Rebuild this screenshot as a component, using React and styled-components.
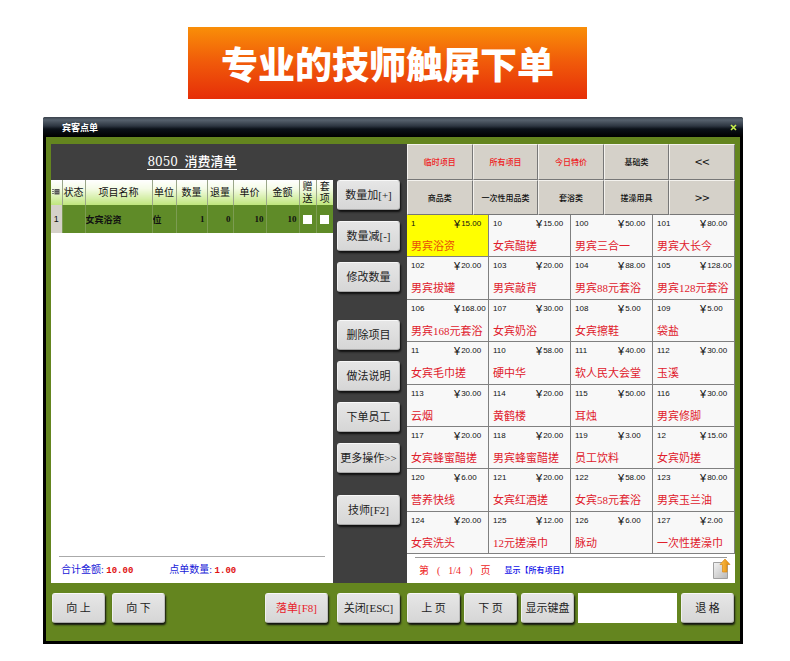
import React, { useState } from 'react'
import styled, { createGlobalStyle } from 'styled-components'

const GlobalStyle = createGlobalStyle`
  * {
    box-sizing: border-box;
  }
  body {
    margin: 0;
    background: white;
    font-family: "Liberation Serif", "Noto Sans CJK SC", sans-serif;
    color: #111;
  }
  button, input {
    margin: 0;
    padding: 0;
    font-family: inherit;
    color: inherit;
  }
`

const Hero = styled.header`
  padding: 27px 203px 18px 188px;
`

const Banner = styled.h1`
  margin: 0;
  height: 72px;
  line-height: 72px;
  text-align: center;
  white-space: nowrap;
  font-family: "Noto Sans CJK SC", sans-serif;
  font-size: 37px;
  font-weight: 900;
  color: white;
  background: linear-gradient(#f98f08, #f0590a 50%, #e62e08);
`

const Window = styled.main`
  margin: 0 47px 18px 43px;
  border: 3px solid black;
  border-top: 0;
  border-radius: 3px 3px 0 0;
  background: #64851f;
`

const TitleBar = styled.div`
  display: flex;
  align-items: center;
  justify-content: space-between;
  height: 20px;
  margin: 0 -3px;
  padding: 0 6px 0 19px;
  border-radius: 2px 2px 0 0;
  background: linear-gradient(#3a424c, #56616d 15%, #2d3641 45%, #0b1119 60%, #000);
  color: white;
  font-size: 9px;
  font-weight: 700;
`

const CloseButton = styled.button`
  display: flex;
  border: 0;
  background: none;
  color: #c8f04a;
`

const Columns = styled.div`
  display: grid;
  grid-template-columns: minmax(0, 282fr) 74px minmax(0, 328fr);
  margin: 0 5px;
`

const Workspace = styled(Columns)`
  margin-top: 7px;
  min-height: 439px;
`

const Bill = styled.section`
  display: flex;
  flex-direction: column;
  background: white;
`

const BillTitle = styled.h2`
  margin: 0;
  height: 36px;
  line-height: 36px;
  text-align: center;
  white-space: pre;
  font-size: 13px;
  font-weight: 500;
  color: white;
  background: #3f3f3f;
  span {
    border-bottom: 1px solid white;
  }
  b {
    font-family: "DejaVu Serif", serif;
    font-size: 12px;
    font-weight: 400;
  }
`

const BillTable = styled.table`
  width: 100%;
  table-layout: fixed;
  border-collapse: collapse;
  th, td {
    padding: 0;
    overflow: hidden;
    white-space: nowrap;
  }
  th {
    height: 25px;
    border-right: 1px solid #9aa68a;
    font-size: 10px;
    line-height: 12px;
    font-weight: 400;
    background: linear-gradient(white, #f4fbe6 35%, #bfe67c);
  }
  td {
    height: 28px;
    border-right: 1px solid #7c9c52;
    font-size: 9px;
    font-weight: 700;
    background: #5f8b28;
  }
  th:last-child, td:last-child {
    border-right: 0;
  }
  .RowNo {
    text-align: center;
    font-weight: 400;
    font-family: "Liberation Sans", sans-serif;
    background: #d5d1c9;
  }
  .Number {
    padding-right: 2px;
    text-align: right;
  }
`

const Tick = styled.input`
  appearance: none;
  display: block;
  width: 9px;
  height: 9px;
  margin: 0 auto;
  background: white;
  &:checked {
    background: #333;
  }
`

const Totals = styled.div`
  display: flex;
  gap: 36px;
  height: 27px;
  margin: auto 8px 0;
  padding-left: 2px;
  border-top: 1px solid #aaa;
  font-size: 10px;
  line-height: 26px;
  color: #1818d8;
  b {
    font-family: "Liberation Mono", monospace;
    font-size: 9px;
    color: #e01010;
  }
`

const Actions = styled.div`
  padding: 36px 7px 0 4px;
  background: #3f3f3f;
`

const ActionGroup = styled.div`
  display: grid;
  gap: 11px;
  margin-bottom: ${props => props.$space}px;
`

const PushButton = styled.button`
  flex: none;
  width: ${props => (props.$wide ? 63 : 53)}px;
  height: 30px;
  border: 1px solid;
  border-color: #f8f8f8 #bdbdbd #a8a8a8 #f0f0f0;
  border-radius: 3px;
  background: linear-gradient(#e6e6e6, #d6d6d6);
  box-shadow: 1px 2px 2px #111;
  font-size: 11px;
  line-height: 26px;
  white-space: pre;
  color: ${props => (props.$red ? '#e8202a' : '#222')};
  &:active {
    background: #c8c8c8;
  }
`

const Menu = styled.section`
  display: flex;
  flex-direction: column;
  background: white;
`

const Categories = styled.nav`
  display: grid;
  grid-template-columns: repeat(5, 1fr);
  grid-template-rows: 36px 35px;
`

const Category = styled.button`
  border: 1px solid;
  border-color: #f4f2ee #777 #777 #f4f2ee;
  background: #d5d1c9;
  font-family: "Noto Sans CJK SC", sans-serif;
  font-size: ${props => (props.$arrow ? 13 : 8)}px;
  font-weight: ${props => (props.$arrow ? 400 : 500)};
  line-height: 16px;
  color: ${props => (props.$red ? '#ee1c24' : '#111')};
`

const Items = styled.div`
  flex: 1;
  display: grid;
  grid-template-columns: repeat(4, 1fr);
  grid-auto-rows: minmax(42px, 1fr);
`

const Item = styled.button`
  display: grid;
  grid-template-columns: 43px 1fr;
  grid-template-rows: 12px 16px;
  row-gap: 8px;
  padding: 3px 0 0 4px;
  border: 0;
  border-right: 1px solid #808080;
  border-bottom: 1px solid #808080;
  background: ${props => (props.$active ? '#ffff00' : '#f8f8f8')};
  text-align: left;
  white-space: nowrap;
  .Code, .Price {
    font-family: "Liberation Sans", sans-serif;
    font-size: 8px;
    line-height: 12px;
  }
  .Price {
    display: flex;
    gap: 1px;
  }
  .Yen {
    font-size: 11px;
  }
  .Name {
    grid-column: 1 / 3;
    font-size: 11px;
    line-height: 16px;
    color: ${props => (props.$active ? '#e8500a' : '#e0202c')};
  }
`

const Pager = styled.div`
  display: flex;
  align-items: center;
  height: 26px;
  margin: 3px 8px 0;
  padding-left: 4px;
  border-top: 1px solid #999;
  font-size: 10px;
  line-height: 22px;
  color: #ee1c24;
  span {
    margin-right: 8px;
  }
  .Showing {
    margin-left: 6px;
    font-size: 8px;
    font-weight: 500;
    color: #1010e8;
  }
`

const ExportButton = styled.button`
  display: flex;
  align-self: flex-start;
  margin: 0 -4px 0 auto;
  border: 0;
  background: none;
`

const BottomBar = styled(Columns)`
  padding: 10px 0 18px;
`

const BarSection = styled.div`
  display: flex;
  gap: ${props => props.$gap}px;
  padding: ${props => props.$pad};
  .Push {
    margin-left: auto;
  }
`

const KeyInput = styled.input`
  flex: 1;
  width: 0;
  height: 30px;
  padding: 0 6px;
  border: 0;
  background: white;
  font-size: 13px;
`

const categories = [
  ['临时项目', true],
  ['所有项目', true],
  ['今日特价', true],
  ['基础类'],
  ['<<'],
  ['商品类'],
  ['一次性用品类'],
  ['套浴类'],
  ['搓澡用具'],
  ['>>'],
]

const items = [
  ['1', '15.00', '男宾浴资'],
  ['10', '15.00', '女宾醋搓'],
  ['100', '50.00', '男宾三合一'],
  ['101', '80.00', '男宾大长今'],
  ['102', '20.00', '男宾拔罐'],
  ['103', '20.00', '男宾敲背'],
  ['104', '88.00', '男宾88元套浴'],
  ['105', '128.00', '男宾128元套浴'],
  ['106', '168.00', '男宾168元套浴'],
  ['107', '30.00', '女宾奶浴'],
  ['108', '5.00', '女宾擦鞋'],
  ['109', '5.00', '袋盐'],
  ['11', '20.00', '女宾毛巾搓'],
  ['110', '58.00', '硬中华'],
  ['111', '40.00', '软人民大会堂'],
  ['112', '30.00', '玉溪'],
  ['113', '30.00', '云烟'],
  ['114', '20.00', '黄鹤楼'],
  ['115', '50.00', '耳烛'],
  ['116', '30.00', '男宾修脚'],
  ['117', '20.00', '女宾蜂蜜醋搓'],
  ['118', '20.00', '男宾蜂蜜醋搓'],
  ['119', '3.00', '员工饮料'],
  ['12', '15.00', '女宾奶搓'],
  ['120', '6.00', '营养快线'],
  ['121', '20.00', '女宾红酒搓'],
  ['122', '58.00', '女宾58元套浴'],
  ['123', '80.00', '男宾玉兰油'],
  ['124', '20.00', '女宾洗头'],
  ['125', '12.00', '12元搓澡巾'],
  ['126', '6.00', '脉动'],
  ['127', '2.00', '一次性搓澡巾'],
]

const actionGroups = [
  { space: 28, labels: ['数量加[+]', '数量减[-]', '修改数量'] },
  { space: 22, labels: ['删除项目', '做法说明', '下单员工', '更多操作>>'] },
  { space: 0, labels: ['技师[F2]'] },
]

const CloseIcon = () => (
  <svg width="7" height="7" viewBox="0 0 7 7">
    <path d="M1 1l5 5M6 1L1 6" stroke="currentColor" strokeWidth="1.6" />
  </svg>
)

const ListIcon = () => (
  <svg width="8" height="8" viewBox="0 0 8 8">
    <path d="M0 1.5h2M0 3.5h2M0 5.5h2" stroke="#777" />
    <path d="M2.5 1h5v5.500h-5z" fill="#555" />
    <path d="M3 2.500h4M3 4.500h4" stroke="#999" strokeWidth=".6" />
  </svg>
)

const ExportIcon = () => (
  <svg width="19" height="22" viewBox="0 0 19 22">
    <defs>
      <linearGradient id="sheet" x1="0" y1="0" x2="1" y2="1">
        <stop offset="0" stopColor="#f4f4f4" />
        <stop offset="1" stopColor="#b8b8b8" />
      </linearGradient>
      <linearGradient id="arrow" x1="0" y1="0" x2="1" y2="0">
        <stop offset="0" stopColor="#ffc34d" />
        <stop offset="1" stopColor="#e08a0a" />
      </linearGradient>
    </defs>
    <path d="M1.500 4.500h14v16h-14z" fill="url(#sheet)" stroke="#a0a0a0" />
    <path d="M13 1l5 5.500h-3v7.500h-4.500V6.500H8z" fill="url(#arrow)" stroke="#d88a18" strokeWidth=".7" />
  </svg>
)

const BillPanel = () => (
  <Bill>
    <BillTitle><span><b>8050</b>{'  '}消费清单</span></BillTitle>
    <BillTable>
      <colgroup>
        <col width="11" />
        <col width="23" />
        <col />
        <col width="24" />
        <col width="31" />
        <col width="26" />
        <col width="33" />
        <col width="33" />
        <col width="17" />
        <col width="17" />
      </colgroup>
      <thead>
        <tr>
          <th aria-label="序号"><ListIcon /></th>
          <th>状态</th>
          <th>项目名称</th>
          <th>单位</th>
          <th>数量</th>
          <th>退量</th>
          <th>单价</th>
          <th>金额</th>
          <th>赠<br />送</th>
          <th>套<br />项</th>
        </tr>
      </thead>
      <tbody>
        <tr>
          <td className="RowNo">1</td>
          <td />
          <td>女宾浴资</td>
          <td>位</td>
          <td className="Number">1</td>
          <td className="Number">0</td>
          <td className="Number">10</td>
          <td className="Number">10</td>
          <td><Tick type="checkbox" aria-label="赠送" /></td>
          <td><Tick type="checkbox" aria-label="套项" /></td>
        </tr>
      </tbody>
    </BillTable>
    <Totals>
      <div>合计金额: <b>10.00</b></div>
      <div>点单数量: <b>1.00</b></div>
    </Totals>
  </Bill>
)

const MenuPanel = () => {
  const [active, setActive] = useState('1')

  return (
    <Menu>
      <Categories>
        {categories.map(([label, red]) => (
          <Category key={label} $red={red} $arrow={label.length === 2}>{label}</Category>
        ))}
      </Categories>
      <Items>
        {items.map(([code, price, name]) => (
          <Item key={code} $active={code === active} onClick={() => setActive(code)}>
            <span className="Code">{code}</span>
            <span className="Price"><span className="Yen">¥</span><span>{price}</span></span>
            <span className="Name">{name}</span>
          </Item>
        ))}
      </Items>
      <Pager>
        <span>第</span>
        <span>(</span>
        <span>1/4</span>
        <span>)</span>
        <span>页</span>
        <span className="Showing">显示【所有项目】</span>
        <ExportButton aria-label="导出"><ExportIcon /></ExportButton>
      </Pager>
    </Menu>
  )
}

const App = () => (
  <>
    <GlobalStyle />
    <Hero>
      <Banner>专业的技师触屏下单</Banner>
    </Hero>
    <Window>
      <TitleBar>
        宾客点单
        <CloseButton aria-label="关闭"><CloseIcon /></CloseButton>
      </TitleBar>
      <Workspace>
        <BillPanel />
        <Actions>
          {actionGroups.map(group => (
            <ActionGroup key={group.labels[0]} $space={group.space}>
              {group.labels.map(label => <PushButton key={label} $wide>{label}</PushButton>)}
            </ActionGroup>
          ))}
        </Actions>
        <MenuPanel />
      </Workspace>
      <BottomBar>
        <BarSection $gap={7} $pad="0 5px 0 1px">
          <PushButton>向 上</PushButton>
          <PushButton>向 下</PushButton>
          <PushButton className="Push" $wide $red>落单[F8]</PushButton>
        </BarSection>
        <BarSection $gap={0} $pad="0 0 0 4px">
          <PushButton $wide>关闭[ESC]</PushButton>
        </BarSection>
        <BarSection $gap={4} $pad="0 1px 0 0">
          <PushButton>上 页</PushButton>
          <PushButton>下 页</PushButton>
          <PushButton>显示键盘</PushButton>
          <KeyInput type="text" aria-label="项目编码" />
          <PushButton>退 格</PushButton>
        </BarSection>
      </BottomBar>
    </Window>
  </>
)

export default App
